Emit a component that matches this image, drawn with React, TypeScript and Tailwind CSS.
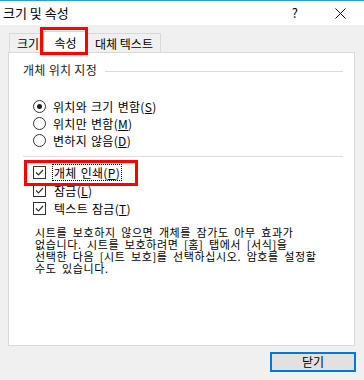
export default function App() {
  const font = { fontFamily: '"Noto Sans CJK KR", "Noto Sans", sans-serif' };

  const Radio = ({ checked, label, mn }: { checked?: boolean; label: string; mn: string }) => (
    <div className="flex items-center h-[17px]">
      <span className="w-[13px] h-[13px] rounded-full border border-[#333] bg-white flex items-center justify-center">
        {checked && <span className="w-[5px] h-[5px] rounded-full bg-[#222]" />}
      </span>
      <span className="ml-[7px] text-[12px] leading-[16px] text-black tracking-[0.3px] [word-spacing:1px]">
        {label}(<span className="underline">{mn}</span>)
      </span>
    </div>
  );

  const Check = ({ label, mn, focus }: { label: string; mn: string; focus?: boolean }) => (
    <div className="flex items-center h-[18px]">
      <span className="w-[13px] h-[13px] border border-[#333] bg-white flex items-center justify-center">
        <svg width="11" height="11" viewBox="0 0 11 11" fill="none" stroke="#333" strokeWidth="1.2">
          <polyline points="2,5.5 4.5,8 9,3" />
        </svg>
      </span>
      <span
        className={
          "ml-[6px] text-[12px] leading-[15px] text-black px-px tracking-[0.3px] [word-spacing:1px] " +
          (focus ? "border border-dotted border-black" : "border border-transparent")
        }
      >
        {label}(<span className="underline">{mn}</span>)
      </span>
    </div>
  );

  return (
    <div className="relative w-[364px] h-[380px] bg-[#f0f0f0] flex flex-col overflow-hidden" style={font}>
      {/* title bar */}
      <div className="h-[25px] bg-white border-t border-[#2a9fd6] flex items-center">
        <span className="ml-[3px] text-[13px] text-black">크기 및 속성</span>
        <span className="ml-auto text-[13px] text-black mr-[37px]">?</span>
        <svg width="11" height="11" viewBox="0 0 11 11" stroke="#111" strokeWidth="1" className="mr-[18px]">
          <line x1="0.5" y1="0.5" x2="10.5" y2="10.5" />
          <line x1="10.5" y1="0.5" x2="0.5" y2="10.5" />
        </svg>
      </div>

      <div className="px-[8px] pt-[6px] pr-[9px]">
        {/* tabs */}
        <div className="relative z-10 flex items-end h-[22px] -mb-px text-[12px] text-black">
          <div className="ml-px w-[34px] h-[20px] border border-b-0 border-[#d9d9d9] flex items-center justify-center pl-[4px]">
            크기
          </div>
          <div className="w-[45px] h-[22px] bg-white border border-b-0 border-[#d9d9d9] flex items-center justify-center">
            속성
          </div>
          <div className="w-[73px] h-[20px] border border-b-0 border-l-0 border-[#d9d9d9] flex items-center justify-center">
            대체 텍스트
          </div>
        </div>

        {/* panel */}
        <div className="h-[294px] bg-white border border-[#d9d9d9] text-black">
          <div className="mt-[9px] h-[16px] flex items-center pl-[14px] pr-[11px]">
            <span className="text-[12px] leading-[16px] text-[#222] tracking-[0.3px]">개체 위치 지정</span>
            <div className="flex-1 h-px bg-[#dcdcdc] ml-[8px] mt-[2px]" />
          </div>

          <div className="mt-[20px] pl-[24px]">
            <Radio checked label="위치와 크기 변함" mn="S" />
            <Radio label="위치만 변함" mn="M" />
            <Radio label="변하지 않음" mn="D" />
          </div>

          <div className="mt-[7px] ml-[14px] mr-[11px] h-px bg-[#dcdcdc]" />

          <div className="mt-[6px] pl-[24px]">
            <Check label="개체 인쇄" mn="P" focus />
            <Check label="잠금" mn="L" />
            <Check label="텍스트 잠금" mn="T" />
          </div>

          <p className="mt-[9px] pl-[26px] text-[11px] leading-[12px] text-black tracking-[0.6px] [word-spacing:2.5px]">
            시트를 보호하지 않으면 개체를 잠가도 아무 효과가
            <br />
            없습니다. 시트를 보호하려면 [홈] 탭에서 [서식]을
            <br />
            선택한 다음 [시트 보호]를 선택하십시오. 암호를 설정할
            <br />
            수도 있습니다.
          </p>
        </div>
      </div>

      {/* footer */}
      <div className="mt-[6px] flex justify-end pr-[8px]">
        <button className="w-[86px] h-[20px] bg-[#e1e1e1] border-2 border-[#0078d7] text-[12px] leading-[14px] text-black flex items-center justify-center">
          닫기
        </button>
      </div>

      {/* red highlight boxes */}
      <div className="absolute left-[40px] top-[27px] w-[48px] h-[28px] border-[3px] border-[#f00] z-20" />
      <div className="absolute left-[24px] top-[160px] w-[114px] h-[26px] border-[3px] border-[#f00] z-20" />
    </div>
  );
}
